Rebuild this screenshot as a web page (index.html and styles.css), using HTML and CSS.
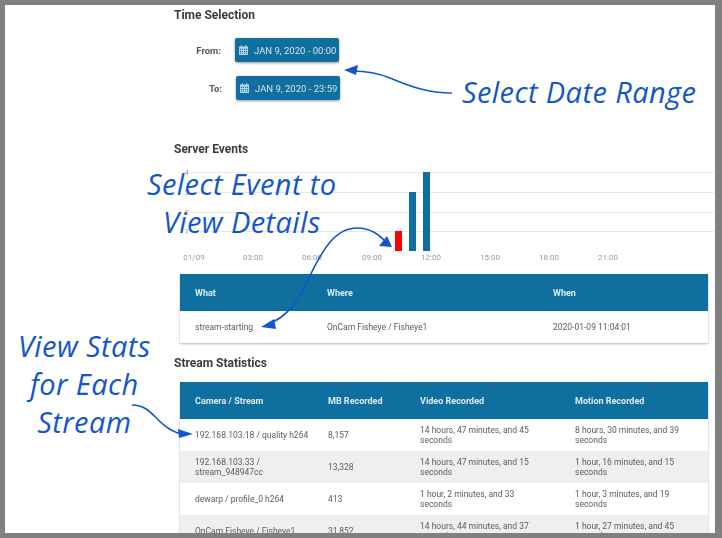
FILE: index.html
```html
<!DOCTYPE html>
<html lang="en">
<head>
	<meta charset="utf-8">
	<title>Server Events</title>
	<link rel="stylesheet" href="styles.css">
</head>
<body>
<div class="frame">
	<div class="content">
		<p class="titleP">Time Selection</p>
		<div class="timeRow">
			<span class="timeLabel">From:</span>
			<button class="dateBtn" type="button">
				<svg class="calIcon" viewBox="0 0 10 11"><path d="M2 0h1v1.500h4V0h1v1.500h2V11H0V1.500h2zM1 4v1.500h1.500V4zm2.500 0v1.500h1V4zm2 0v1.500h1V4zm2 0v1.500H9V4zM1 6.500V8h1.500V6.500zm2.500 0V8h1V6.500zm2 0V8h1V6.500zm2 0V8H9V6.500zM1 9v1h1.500V9zm2.500 0v1h1V9zm2 0v1h1V9zm2 0v1H9V9z" fill-rule="evenodd"/></svg>
				JAN 9, 2020 - 00:00
			</button>
		</div>
		<div class="timeRow timeRowTo">
			<span class="timeLabel">To:</span>
			<button class="dateBtn" type="button">
				<svg class="calIcon" viewBox="0 0 10 11"><path d="M2 0h1v1.500h4V0h1v1.500h2V11H0V1.500h2zM1 4v1.500h1.500V4zm2.500 0v1.500h1V4zm2 0v1.500h1V4zm2 0v1.500H9V4zM1 6.500V8h1.500V6.500zm2.500 0V8h1V6.500zm2 0V8h1V6.500zm2 0V8H9V6.500zM1 9v1h1.500V9zm2.500 0v1h1V9zm2 0v1h1V9zm2 0v1H9V9z" fill-rule="evenodd"/></svg>
				JAN 9, 2020 - 23:59
			</button>
		</div>

		<p class="titleP eventsTitle">Server Events</p>
		<svg class="chart" viewBox="0 0 535 100">
			<g class="gridLines">
				<path d="M10 7.500H534M10 27.500H534M10 47.500H534M10 66.500H534"/>
			</g>
			<g class="yTicks">
				<text x="9" y="10">4</text>
				<text x="9" y="30">3</text>
				<text x="9" y="50">2</text>
				<text x="9" y="69">1</text>
			</g>
			<rect class="barAlert" x="215" y="66" width="7" height="20"/>
			<rect class="bar" x="229" y="27" width="7" height="59"/>
			<rect class="bar" x="243" y="7" width="7" height="79"/>
			<g class="xTicks">
				<text x="14" y="95">01/09</text>
				<text x="73" y="95">03:00</text>
				<text x="132" y="95">06:00</text>
				<text x="192" y="95">09:00</text>
				<text x="251" y="95">12:00</text>
				<text x="310" y="95">15:00</text>
				<text x="369" y="95">18:00</text>
				<text x="428" y="95">21:00</text>
			</g>
		</svg>

		<table class="dataTable eventTable">
			<colgroup><col class="colWhat"><col class="colWhere"><col></colgroup>
			<thead><tr><th>What</th><th>Where</th><th>When</th></tr></thead>
			<tbody>
				<tr><td>stream-starting</td><td>OnCam Fisheye / Fisheye1</td><td>2020-01-09 11:04:01</td></tr>
			</tbody>
		</table>

		<p class="titleP statsTitle">Stream Statistics</p>
		<table class="dataTable statsTable">
			<colgroup><col class="colCam"><col class="colMb"><col class="colVideo"><col></colgroup>
			<thead><tr><th>Camera / Stream</th><th>MB Recorded</th><th>Video Recorded</th><th>Motion Recorded</th></tr></thead>
			<tbody>
				<tr><td>192.168.103.18 / quality h264</td><td>8,157</td><td>14 hours, 47 minutes, and 45 seconds</td><td>8 hours, 30 minutes, and 39 seconds</td></tr>
				<tr><td>192.168.103.33 / stream_948947cc</td><td>13,328</td><td>14 hours, 47 minutes, and 15 seconds</td><td>1 hour, 16 minutes, and 15 seconds</td></tr>
				<tr><td>dewarp / profile_0 h264</td><td>413</td><td>1 hour, 2 minutes, and 33 seconds</td><td>1 hour, 3 minutes, and 19 seconds</td></tr>
				<tr><td>OnCam Fisheye / Fisheye1</td><td>31,852</td><td>14 hours, 44 minutes, and 37 seconds</td><td>1 hour, 27 minutes, and 45 seconds</td></tr>
			</tbody>
		</table>
	</div>

	<svg class="arrows" viewBox="0 0 722 538">
		<path d="M452 93C425 93 405 84 390 78C378 73 365 71 352 71"/>
		<polygon points="344,70 358,65 356,75"/>
		<path d="M268 324C285 318 296 305 308 280C322 250 335 228 357 228C372 228 380 236 386 242"/>
		<polygon points="392,247 379,246 387,236"/>
		<polygon points="261,327 274,319 276,329"/>
		<path d="M132 405C150 405 155 420 168 428C174 432 180 434 184 434"/>
		<polygon points="193,434 178,429 179,438"/>
	</svg>
	<div class="note noteRange">Select Date Range</div>
	<div class="note noteEvent">Select Event to<br>View Details</div>
	<div class="note noteStats">View Stats<br>for Each<br>Stream</div>
</div>
</body>
</html>
```
FILE: styles.css
```css
html,body{margin: 0;padding: 0;background: #fff;}
.frame{position: relative;box-sizing: border-box;width: 722px;height: 538px;overflow: hidden;border: solid #808080;border-width: 5px 7px 5px 5px;background: #fff;font-family: Roboto, "Liberation Sans", sans-serif;}
.content{box-sizing: border-box;height: 528px;overflow: hidden;padding: 2px 7px 0 169px;filter: blur(.45px);}
.titleP{margin: 0;height: 16px;line-height: 16px;font-size: 12px;font-weight: 700;color: #3c3c3c;}

.timeRow{display: flex;align-items: center;height: 24px;margin-top: 15px;}
.timeRowTo{margin-top: 14px;padding-left: 1px;}
.timeLabel{width: 47px;text-align: right;font-size: 9.500px;font-weight: 700;color: #555;}
.dateBtn{display: flex;align-items: center;gap: 6px;box-sizing: border-box;width: 104px;height: 24px;margin-left: 14px;padding: 0 0 0 4px;border: 0;border-radius: 2px;background: #0f70a0;color: #cfe3ec;font-family: inherit;font-size: 9.500px;white-space: nowrap;box-shadow: 0 1px 3px rgba(0,0,0,.4);}
.calIcon{width: 9px;height: 10px;fill: #bcd8e6;flex: none;}

.eventsTitle{margin-top: 41px;}
.chart{display: block;width: 535px;height: 100px;margin: 8px -7px 0 6px;}
.gridLines path{stroke: #e8e8e8;stroke-width: 1;fill: none;}
.yTicks text{font-size: 8px;fill: #999;text-anchor: end;}
.xTicks text{font-size: 8px;fill: #999;text-anchor: middle;}
.bar{fill: #0f70a0;}
.barAlert{fill: #f00;}

.dataTable{width: 528px;margin-left: 6px;border-collapse: collapse;table-layout: fixed;box-shadow: 0 1px 2px rgba(0,0,0,.3);font-size: 8.500px;color: #5c5c5c;}
.dataTable th{height: 37px;padding: 0 0 0 15px;background: #0f70a0;color: #dcebf2;font-size: 9px;font-weight: 700;text-align: left;}
.dataTable td{height: 32px;padding: 0 15px;line-height: 10px;}
.eventTable{margin-top: 9px;}
.colWhat{width: 132px;}
.colWhere{width: 226px;}
.statsTitle{margin-top: 12px;}
.statsTable{margin-top: 11px;}
.colCam{width: 133px;}
.colMb{width: 92px;}
.colVideo{width: 155px;}
.statsTable td:first-child{padding-right: 2px;}
.statsTable td:last-child{padding-right: 8px;}
.statsTable tbody tr:nth-child(even){background: #efefef;}

.arrows{position: absolute;left: -5px;top: -5px;width: 722px;height: 538px;pointer-events: none;}
.arrows path{fill: none;stroke: #1256cc;stroke-width: 1.600;}
.arrows polygon{fill: #1256cc;}
.note{position: absolute;font-family: "Open Sans", "Liberation Sans", sans-serif;font-style: italic;font-size: 29px;letter-spacing: .4px;line-height: 38px;color: #1256cc;text-align: center;white-space: nowrap;}
.noteRange{left: 457px;top: 68px;}
.noteEvent{left: 142px;top: 160px;}
.noteStats{left: 13px;top: 322px;}
```
